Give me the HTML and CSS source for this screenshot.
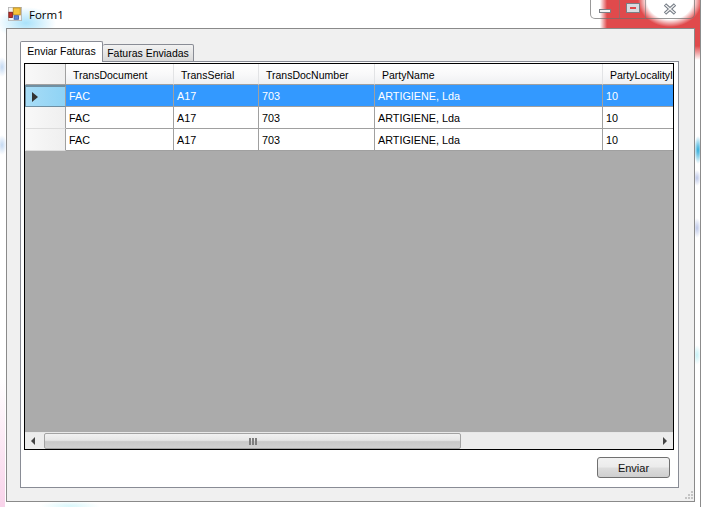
FILE: index.html
```html
<!DOCTYPE html>
<html lang="en">
<head>
    <meta charset="UTF-8">
    <meta name="viewport" content="width=device-width, initial-scale=1.0">
    <title>Form1</title>
    <link rel="stylesheet" href="styles.css">
</head>
<body>
    <div class="window">
        <div class="title-bar">
            <svg class="form-icon" width="14" height="14" viewBox="0 0 16 16">
                <rect x="0.5" y="0.5" width="15" height="15" fill="#f4f4f4" stroke="#b5b5b5"/>
                <rect x="6" y="1" width="8" height="8" fill="#f6c33c" stroke="#b98a1e"/>
                <rect x="1" y="6" width="4" height="6" fill="#c8302a" stroke="#7d1d1a"/>
                <rect x="7" y="10" width="5" height="4" fill="#5b86d8" stroke="#3b5ba8"/>
            </svg>
            <span class="form-title">Form1</span>
            <div class="window-controls">
                <div class="control control-min"><span class="min-glyph"></span></div>
                <div class="control control-max"><span class="max-glyph"></span></div>
                <div class="control control-close">
                    <svg width="14" height="12" viewBox="0 0 14 12">
                        <path d="M2 1.5 L12 10.5 M12 1.5 L2 10.5" stroke="#6f7780" stroke-width="3.4" fill="none"/>
                        <path d="M2.5 2 L11.5 10 M11.5 2 L2.5 10" stroke="#f2f2f2" stroke-width="1.4" fill="none"/>
                    </svg>
                </div>
            </div>
        </div>

        <div class="client">
            <div class="tabs">
                <div class="tab tab-active">Enviar Faturas</div>
                <div class="tab">Faturas Enviadas</div>
            </div>
            <div class="tab-page">
                <div class="data-grid">
                    <div class="grid-row grid-head">
                        <div class="row-header"></div>
                        <div class="head-cell">TransDocument</div>
                        <div class="head-cell">TransSerial</div>
                        <div class="head-cell">TransDocNumber</div>
                        <div class="head-cell">PartyName</div>
                        <div class="head-cell">PartyLocalityI</div>
                    </div>
                    <div class="grid-row selected">
                        <div class="row-header current"><span class="row-arrow"></span></div>
                        <div class="cell">FAC</div>
                        <div class="cell">A17</div>
                        <div class="cell">703</div>
                        <div class="cell">ARTIGIENE, Lda</div>
                        <div class="cell">10</div>
                    </div>
                    <div class="grid-row">
                        <div class="row-header"></div>
                        <div class="cell">FAC</div>
                        <div class="cell">A17</div>
                        <div class="cell">703</div>
                        <div class="cell">ARTIGIENE, Lda</div>
                        <div class="cell">10</div>
                    </div>
                    <div class="grid-row">
                        <div class="row-header"></div>
                        <div class="cell">FAC</div>
                        <div class="cell">A17</div>
                        <div class="cell">703</div>
                        <div class="cell">ARTIGIENE, Lda</div>
                        <div class="cell">10</div>
                    </div>
                    <div class="grid-empty"></div>
                    <div class="scrollbar">
                        <div class="scroll-btn"><span class="arrow-left"></span></div>
                        <div class="scroll-thumb">
                            <span class="grip-line"></span>
                            <span class="grip-line"></span>
                            <span class="grip-line"></span>
                        </div>
                        <div class="scroll-btn scroll-btn-right"><span class="arrow-right"></span></div>
                    </div>
                </div>
                <div class="page-footer">
                    <button class="send-button" type="button">Enviar</button>
                </div>
            </div>
            <svg class="size-grip" width="11" height="11" viewBox="0 0 11 11">
                <path d="M8 1h2v2h-2z M5 4h2v2h-2z M8 4h2v2h-2z M2 7h2v2h-2z M5 7h2v2h-2z M8 7h2v2h-2z" fill="#c4c4c4"/>
            </svg>
        </div>
    </div>
</body>
</html>
```

FILE: styles.css
```css
body {
    margin: 0;
    background: #fff;
    font-family: "Liberation Sans", Arial, sans-serif;
    font-size: 11px;
    color: #000;
}

.window {
    position: relative;
    width: 701px;
    height: 507px;
    overflow: hidden;
    box-sizing: border-box;
    border-right: 1px solid #8c8c8c;
    background:
        radial-gradient(ellipse 30px 16px at 26px 23px, #a9e2fb 0%, rgba(169, 226, 251, 0) 100%),
        radial-gradient(ellipse 5px 10px at 2px 67px, #c4d9f2 0%, rgba(196, 217, 242, 0) 100%),
        radial-gradient(ellipse 5px 10px at 2px 145px, #c4d9f2 0%, rgba(196, 217, 242, 0) 100%),
        radial-gradient(ellipse 30px 5px at 70px 506px, #d8f7fb 0%, rgba(216, 247, 251, 0) 100%),
        linear-gradient(to bottom, rgba(248, 205, 232, 0), #f8d3ea) left bottom / 5px 130px no-repeat,
        radial-gradient(ellipse 32px 27px at 670px 0px, #fff 72%, rgba(255, 255, 255, 0) 100%),
        linear-gradient(to bottom, #e04a4c 0, #e04a4c 46px, rgba(224, 74, 76, 0) 60px) right top / 6px 100% no-repeat,
        linear-gradient(to right, rgba(224, 74, 76, 0) 0, #e04a4c 7px) 600px 0 / 102px 29px no-repeat,
        radial-gradient(ellipse 4px 14px at 698px 150px, #2aa9d8 0%, rgba(42, 169, 216, 0) 100%),
        radial-gradient(ellipse 4px 8px at 697px 178px, #bcc7e8 0%, rgba(188, 199, 232, 0) 100%),
        radial-gradient(ellipse 4px 10px at 697px 228px, #bcc7e8 0%, rgba(188, 199, 232, 0) 100%),
        radial-gradient(ellipse 4px 10px at 697px 355px, #c5f1f6 0%, rgba(197, 241, 246, 0) 100%),
        #fff;
}

.title-bar {
    display: flex;
    align-items: flex-start;
    height: 28px;
    padding-left: 8px;
    padding-right: 5px;
}

.form-icon {
    margin-top: 7px;
}

.form-title {
    margin-top: 7px;
    margin-left: 7px;
    font-family: "Open Sans", sans-serif;
    font-size: 11.5px;
    line-height: 16px;
    color: #000;
}

.window-controls {
    display: flex;
    height: 18px;
    margin-left: auto;
    border: 1px solid rgba(110, 110, 110, 0.7);
    border-top: none;
    border-radius: 0 0 5px 5px;
}

.control {
    display: flex;
    align-items: center;
    justify-content: center;
    box-sizing: border-box;
    height: 18px;
    border-right: 1px solid rgba(120, 120, 120, 0.6);
}

.control-min {
    width: 29px;
}

.control-max {
    width: 26px;
}

.control-close {
    width: 48px;
    border-right: none;
}

.min-glyph {
    width: 10px;
    height: 2px;
    margin-top: 4px;
    background: #f2f2f2;
    border: 1px solid #7b7f85;
}

.max-glyph {
    width: 6px;
    height: 2px;
    margin-top: -2px;
    background: #e04a4c;
    border: 3px solid #d9dde2;
    outline: 1px solid #7b7f85;
}

.client {
    position: relative;
    box-sizing: border-box;
    width: 689px;
    height: 474px;
    margin-left: 6px;
    padding: 12px 15px 13px 13px;
    background: #f0f0f0;
    border: 1px solid #8a8a8a;
}

.tabs {
    display: flex;
    align-items: flex-end;
    height: 21px;
    margin-bottom: -1px;
}

.tab {
    box-sizing: border-box;
    height: 18px;
    width: 91px;
    font-size: 10.5px;
    line-height: 17px;
    text-align: center;
    background: linear-gradient(to bottom, #f2f2f2, #d9d9d9);
    border: 1px solid #898c95;
    border-left: none;
    border-radius: 2px 2px 0 0;
}

.tab-active {
    position: relative;
    z-index: 1;
    height: 21px;
    width: 83px;
    line-height: 19px;
    background: #fff;
    border-left: 1px solid #898c95;
    border-bottom: none;
}

.tab-page {
    box-sizing: border-box;
    height: 427px;
    padding: 1px 4px 0 3px;
    background: #fff;
    border: 1px solid #898c95;
}

.data-grid {
    display: flex;
    flex-direction: column;
    box-sizing: border-box;
    height: 387px;
    border: 1px solid #000;
    background: #ababab;
}

.grid-row {
    display: grid;
    grid-template-columns: 41px 108px 85px 116px 228px 70px;
    height: 22px;
}

.grid-head {
    height: 21px;
}

.row-header {
    box-sizing: border-box;
    display: flex;
    align-items: center;
    padding-left: 6px;
    background: linear-gradient(to right, #f8f8f8, #efefef);
    border-left: 1px solid #e9e9e9;
    border-right: 1px solid #a0a0a0;
    border-bottom: 1px solid #dcdcdc;
}

.grid-head .row-header {
    border-bottom-color: #a0a0a0;
}

.row-header.current {
    background: linear-gradient(to right, #a7dcf6, #8fd3f5);
    border: 1px solid #6f8fa2;
    border-top-width: 2px;
    border-right-color: #a0a0a0;
}

.row-arrow {
    width: 0;
    height: 0;
    border-left: 6px solid #333;
    border-top: 5px solid transparent;
    border-bottom: 5px solid transparent;
}

.head-cell {
    box-sizing: border-box;
    padding-left: 7px;
    font-size: 10.5px;
    line-height: 22px;
    white-space: nowrap;
    overflow: hidden;
    background: linear-gradient(to bottom, #fff 0%, #f9f9fa 50%, #eff0f2 100%);
    border-right: 1px solid #e2e3e5;
    border-bottom: 1px solid #a0a0a0;
}

.head-cell:last-child {
    border-right: none;
}

.cell {
    box-sizing: border-box;
    padding-left: 3px;
    font-size: 10.8px;
    line-height: 23px;
    white-space: nowrap;
    overflow: hidden;
    background: #fff;
    border-right: 1px solid #a0a0a0;
    border-bottom: 1px solid #a0a0a0;
}

.cell:last-child {
    border-right: none;
}

.selected .cell {
    background: #3399ff;
    color: #fff;
}

.grid-empty {
    flex: 1;
}

.scrollbar {
    display: flex;
    align-items: stretch;
    height: 17px;
    background: #ececec;
    border-top: 1px solid #e8e8e8;
    box-sizing: border-box;
}

.scroll-btn {
    display: flex;
    align-items: center;
    width: 19px;
    padding-left: 6px;
    box-sizing: border-box;
}

.scroll-btn-right {
    margin-left: auto;
    justify-content: flex-end;
    padding-left: 0;
    padding-right: 6px;
}

.arrow-left,
.arrow-right {
    width: 0;
    height: 0;
    border-top: 4px solid transparent;
    border-bottom: 4px solid transparent;
}

.arrow-left {
    border-right: 4px solid #444;
}

.arrow-right {
    border-left: 4px solid #444;
}

.scroll-thumb {
    display: flex;
    align-items: center;
    justify-content: center;
    gap: 1px;
    box-sizing: border-box;
    width: 417px;
    background: linear-gradient(to bottom, #f1f1f1 0%, #e6e6e6 45%, #c9c9c9 55%, #d2d2d2 100%);
    border: 1px solid #a3a3a3;
    border-radius: 2px;
}

.grip-line {
    width: 2px;
    height: 7px;
    background: #7e7e7e;
}

.page-footer {
    display: flex;
    justify-content: flex-end;
    padding: 7px 4px 0 0;
}

.send-button {
    width: 73px;
    height: 21px;
    padding: 0;
    font-family: "Liberation Sans", Arial, sans-serif;
    font-size: 11px;
    color: #111;
    background: linear-gradient(to bottom, #f2f2f2 0%, #ebebeb 48%, #dddddd 52%, #cfcfcf 100%);
    border: 1px solid #707070;
    border-radius: 3px;
}

.size-grip {
    position: absolute;
    right: 0;
    bottom: 0;
}
```
